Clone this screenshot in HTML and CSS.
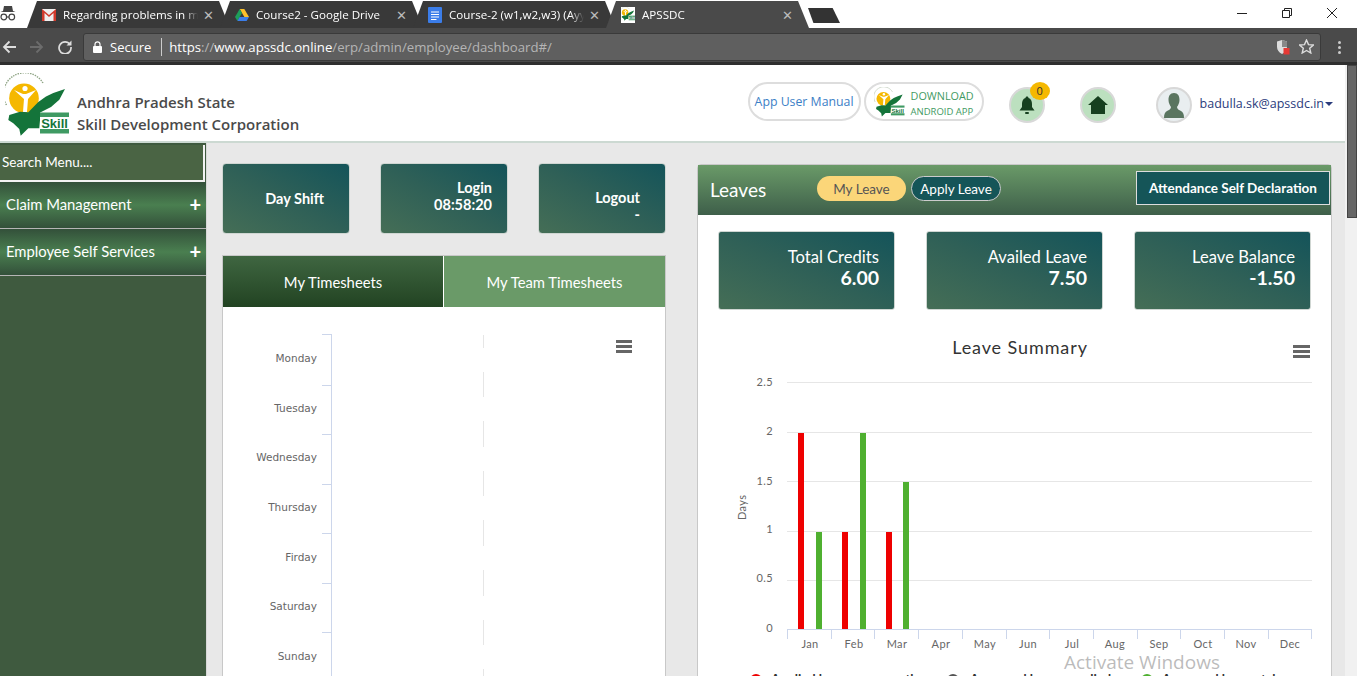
FILE: index.html
```html
<!DOCTYPE html>
<html lang="en">
<head>
    <meta charset="UTF-8">
    <meta name="viewport" content="width=device-width, initial-scale=1.0">
    <title>APSSDC</title>
    <link rel="stylesheet" href="styles.css">
</head>
<body>
    <!-- shared logo, used in header, favicon and download pill -->
    <svg class="defs" width="0" height="0">
        <symbol id="logo-mark" viewBox="0 0 64 64">
            <path d="M1.5 32 A21 21 0 0 1 38 10" fill="none" stroke="#8fa585" stroke-width="1.4" stroke-dasharray="1.5 1"/>
            <circle cx="19" cy="25.3" r="14.8" fill="#f5b800"/>
            <circle cx="20" cy="15.5" r="2.6" fill="#fff"/>
            <path d="M9 17 L19 26 L18 39 L22 39 L23 26 L31 17 L21 21 L18 21 Z" fill="#fff"/>
            <path d="M4.3 42 L15 38.7 L23.3 39.3 L33.3 29 L41 23.5 L48.3 20 L60 16 L54.3 26.7 L46 34 L35.7 39.3 L34.3 55.3 L23.3 55.3 L15.7 62.7 L14.3 56 L8.3 50.3 L3.3 47 Z" fill="#14743a"/>
            <rect x="35" y="39.5" width="29" height="21" fill="#fff"/>
            <rect x="35" y="39.5" width="29" height="4.5" fill="#3f9a63"/>
            <rect x="35" y="56" width="29" height="4.5" fill="#3f9a63"/>
            <text x="49.5" y="54.5" class="logo-skill" text-anchor="middle">Skill</text>
        </symbol>
    </svg>

    <div class="tabstrip">
        <svg class="incognito" width="16" height="18" viewBox="0 0 16 18">
            <path d="M4 2 L12 2 L13 7 L15.5 8 L0.5 8 L3 7 Z" fill="#444"/>
            <circle cx="3.8" cy="13" r="2.8" fill="none" stroke="#444" stroke-width="1.2"/>
            <circle cx="11.8" cy="13" r="2.8" fill="none" stroke="#444" stroke-width="1.2"/>
            <path d="M6.6 13 H9" stroke="#444" stroke-width="1.2"/>
        </svg>
        <div class="tab">
            <svg class="tab-icon" width="14" height="12" viewBox="0 0 14 12">
                <rect width="14" height="12" fill="#eee"/>
                <path d="M0 0 L7 6 L14 0 V12 H11.5 V4 L7 8 L2.5 4 V12 H0 Z" fill="#d0392b"/>
            </svg>
            <span class="tab-title">Regarding problems in mail</span>
            <span class="tab-close">&#x2715;</span>
        </div>
        <div class="tab">
            <svg class="tab-icon" width="14" height="12" viewBox="0 0 14 12">
                <path d="M4.7 0 H9.3 L14 8 H9.4 Z" fill="#fbc02d"/>
                <path d="M4.7 0 L7 4 L2.4 12 L0 8 Z" fill="#1e9e5a"/>
                <path d="M4.6 8 H14 L11.6 12 H2.4 Z" fill="#3b7de9"/>
            </svg>
            <span class="tab-title">Course2 - Google Drive</span>
            <span class="tab-close">&#x2715;</span>
        </div>
        <div class="tab">
            <svg class="tab-icon" width="14" height="16" viewBox="0 0 14 16">
                <rect width="14" height="16" rx="1" fill="#3b7de9"/>
                <path d="M3 5 H11 M3 7.5 H11 M3 10 H11 M3 12.5 H8.5" stroke="#fff" stroke-width="1.1"/>
            </svg>
            <span class="tab-title">Course-2 (w1,w2,w3) (Ayyappa)</span>
            <span class="tab-close">&#x2715;</span>
        </div>
        <div class="tab tab-active">
            <span class="tab-favicon"><svg width="14" height="14"><use href="#logo-mark"/></svg></span>
            <span class="tab-title">APSSDC</span>
            <span class="tab-close">&#x2715;</span>
        </div>
        <div class="new-tab"></div>
        <div class="window-controls">
            <svg width="10" height="10" viewBox="0 0 10 10"><path d="M0 5.5 H10" stroke="#222" stroke-width="1"/></svg>
            <svg width="10" height="10" viewBox="0 0 10 10"><path d="M2.5 2.5 V0.5 H9.5 V7.5 H7.5 M0.5 2.5 H7.5 V9.5 H0.5 Z" fill="none" stroke="#222" stroke-width="1"/></svg>
            <svg width="10" height="10" viewBox="0 0 10 10"><path d="M0 0 L10 10 M10 0 L0 10" stroke="#222" stroke-width="1"/></svg>
        </div>
    </div>

    <div class="toolbar">
        <svg class="nav-icon" width="14" height="14" viewBox="0 0 14 14"><path d="M14 7 H2 M7.5 1.5 L2 7 L7.5 12.5" fill="none" stroke="#ddd" stroke-width="1.8"/></svg>
        <svg class="nav-icon" width="14" height="14" viewBox="0 0 14 14"><path d="M0 7 H12 M6.5 1.5 L12 7 L6.5 12.5" fill="none" stroke="#6c6c6c" stroke-width="1.8"/></svg>
        <svg class="nav-icon" width="14" height="14" viewBox="0 0 14 14"><path d="M12 4.4 A6 6 0 1 0 13 7" fill="none" stroke="#ddd" stroke-width="1.7"/><path d="M13.5 0.5 V5.5 H8.5 Z" fill="#ddd"/></svg>
        <div class="urlbar">
            <svg width="9" height="12" viewBox="0 0 9 12"><path d="M2 5 V3.3 A2.5 2.5 0 0 1 7 3.3 V5" fill="none" stroke="#fff" stroke-width="1.2"/><rect y="5" width="9" height="7" rx="1" fill="#fff"/></svg>
            <span class="secure">Secure</span>
            <span class="url"><b>https</b>://<b>www.apssdc.online</b>/erp/admin/employee/dashboard#/</span>
            <span class="url-icons">
                <svg width="13" height="16" viewBox="0 0 13 16"><path d="M5 1 L10 2.5 V8 C10 11 8 13.5 5 15 C2 13.5 0 11 0 8 V2.5 Z" fill="#ddd"/><path d="M5 1 L10 2.5 V8 H5 Z" fill="#888"/><rect x="6.5" y="9" width="6" height="6.5" fill="#e53935"/></svg>
                <svg width="15" height="15" viewBox="0 0 15 15"><path d="M7.5 1 L9.5 5.6 L14.4 6 L10.7 9.2 L11.8 14 L7.5 11.5 L3.2 14 L4.3 9.2 L0.6 6 L5.5 5.6 Z" fill="none" stroke="#ddd" stroke-width="1.4"/></svg>
            </span>
        </div>
        <div class="dots"><i></i><i></i><i></i></div>
    </div>

    <div class="viewport">
        <div class="app">
            <header class="header">
                <svg class="logo" width="64" height="64"><use href="#logo-mark"/></svg>
                <div class="brand">
                    <div>Andhra Pradesh State</div>
                    <div>Skill Development Corporation</div>
                </div>
                <a class="pill pill-manual">App User Manual</a>
                <a class="pill pill-download">
                    <svg width="31" height="30"><use href="#logo-mark"/></svg>
                    <span class="download-text"><span>DOWNLOAD</span><small>ANDROID APP</small></span>
                </a>
                <div class="round-icon icon-bell">
                    <svg width="16" height="19" viewBox="0 0 16 19"><path d="M8 0.5 C9 0.5 9.5 1.2 9.5 2 C12 2.8 13 5 13 8 V11 L15.5 14.5 H0.5 L3 11 V8 C3 5 4 2.8 6.5 2 C6.5 1.2 7 0.5 8 0.5 Z" fill="#16401f"/><rect x="6" y="16" width="4" height="2" rx="1" fill="#16401f"/></svg>
                    <span class="badge">0</span>
                </div>
                <div class="round-icon icon-home">
                    <svg width="20" height="18" viewBox="0 0 20 18"><path d="M10 0 L20 9 H17 V18 H3 V9 H0 Z" fill="#16401f"/></svg>
                </div>
                <div class="round-icon icon-user">
                    <svg width="20" height="25" viewBox="0 0 20 25"><path d="M10 0 C14 0 15.5 3 15.5 7 C15.5 10 14 12.5 13 14 C13 16 15 17 17 18 C19 19 20 21 20 25 H0 C0 21 1 19 3 18 C5 17 7 16 7 14 C6 12.5 4.5 10 4.5 7 C4.5 3 6 0 10 0 Z" fill="#5a7560"/></svg>
                </div>
                <div class="user-mail">badulla.sk@apssdc.in<span class="caret"></span></div>
            </header>

            <div class="main">
                <aside class="sidebar">
                    <div class="menu-search">Search Menu....</div>
                    <div class="menu-item"><span>Claim Management</span><b>+</b></div>
                    <div class="menu-item"><span>Employee Self Services</span><b>+</b></div>
                </aside>

                <div class="content">
                    <div class="col-left">
                        <div class="shift-row">
                            <div class="shift-card shift-day">Day Shift</div>
                            <div class="shift-card shift-login">Login<br>08:58:20</div>
                            <div class="shift-card shift-logout">Logout<br>-</div>
                        </div>
                        <div class="panel timesheets">
                            <div class="ts-tabs">
                                <div class="ts-tab ts-tab-on">My Timesheets</div>
                                <div class="ts-tab">My Team Timesheets</div>
                            </div>
                            <svg class="chart" width="442" height="369" viewBox="223 307 442 369">
                                <g class="grid-dash">
                                    <path d="M483.5 335 V348 M483.5 372 V397 M483.5 421 V447 M483.5 471 V496 M483.5 520 V546 M483.5 570 V596 M483.5 620 V645 M483.5 669 V676"/>
                                </g>
                                <path class="axis" d="M331.5 334 V676 M322 334.5 H331 M322 385.5 H331 M322 434.5 H331 M322 484.5 H331 M322 533.5 H331 M322 583.5 H331 M322 632.5 H331"/>
                                <g class="day-labels" text-anchor="end">
                                    <text x="317" y="362">Monday</text>
                                    <text x="317" y="412">Tuesday</text>
                                    <text x="317" y="461">Wednesday</text>
                                    <text x="317" y="511">Thursday</text>
                                    <text x="317" y="561">Firday</text>
                                    <text x="317" y="610">Saturday</text>
                                    <text x="317" y="660">Sunday</text>
                                </g>
                                <path class="burger" d="M616 341.5 H632 M616 346.5 H632 M616 351.5 H632"/>
                            </svg>
                        </div>
                    </div>

                    <div class="panel leaves">
                        <div class="leaves-head">
                            <span class="leaves-title">Leaves</span>
                            <span class="chip chip-mine">My Leave</span>
                            <span class="chip chip-apply">Apply Leave</span>
                            <a class="declare-btn">Attendance Self Declaration</a>
                        </div>
                        <div class="stat-row">
                            <div class="stat-card">Total Credits<b>6.00</b></div>
                            <div class="stat-card">Availed Leave<b>7.50</b></div>
                            <div class="stat-card">Leave Balance<b>-1.50</b></div>
                        </div>
                        <svg class="chart" width="633" height="366" viewBox="698 310 633 366">
                            <text class="chart-title" x="1020" y="354" text-anchor="middle">Leave Summary</text>
                            <path class="burger" d="M1293 346.5 H1310 M1293 351.5 H1310 M1293 356.5 H1310"/>
                            <path class="grid-line" d="M787 382.5 H1312 M787 432.5 H1312 M787 481.5 H1312 M787 531.5 H1312 M787 580.5 H1312"/>
                            <path class="axis" d="M787 629.5 H1312 M787.5 630 V639 M831.5 630 V639 M874.5 630 V639 M918.5 630 V639 M962.5 630 V639 M1006.5 630 V639 M1049.5 630 V639 M1093.5 630 V639 M1137.5 630 V639 M1180.5 630 V639 M1224.5 630 V639 M1268.5 630 V639 M1311.5 630 V639"/>
                            <g class="bar-red">
                                <rect x="798" y="433" width="6" height="196"/>
                                <rect x="842" y="532" width="6" height="97"/>
                                <rect x="886" y="532" width="6" height="97"/>
                            </g>
                            <g class="bar-green">
                                <rect x="816" y="532" width="6" height="97"/>
                                <rect x="860" y="433" width="6" height="196"/>
                                <rect x="903" y="482" width="6" height="147"/>
                            </g>
                            <g class="tick-labels" text-anchor="end">
                                <text x="773" y="386">2.5</text>
                                <text x="773" y="435">2</text>
                                <text x="773" y="485">1.5</text>
                                <text x="773" y="533">1</text>
                                <text x="773" y="582">0.5</text>
                                <text x="773" y="632">0</text>
                            </g>
                            <g class="tick-labels" text-anchor="middle">
                                <text x="810" y="648">Jan</text>
                                <text x="854" y="648">Feb</text>
                                <text x="897" y="648">Mar</text>
                                <text x="941" y="648">Apr</text>
                                <text x="985" y="648">May</text>
                                <text x="1028" y="648">Jun</text>
                                <text x="1072" y="648">Jul</text>
                                <text x="1115" y="648">Aug</text>
                                <text x="1159" y="648">Sep</text>
                                <text x="1203" y="648">Oct</text>
                                <text x="1246" y="648">Nov</text>
                                <text x="1290" y="648">Dec</text>
                            </g>
                            <text class="tick-labels" transform="translate(746 520) rotate(-90)">Days</text>
                            <circle cx="756" cy="680" r="6" fill="#ee0000"/>
                            <circle cx="953" cy="680" r="6" fill="#555"/>
                            <circle cx="1147" cy="680" r="6" fill="#4fb030"/>
                            <g class="legend">
                                <text x="771" y="684">Applied leaves per month</text>
                                <text x="970" y="684">Approved leaves applied</text>
                                <text x="1162" y="684">Approved leaves taken</text>
                            </g>
                        </svg>
                    </div>
                </div>
            </div>
            <div class="activate">Activate Windows</div>
        </div>
        <div class="scrollbar"><div class="scroll-thumb"></div></div>
    </div>
</body>
</html>
```

FILE: styles.css
```css
html, body {
    margin: 0;
    height: 676px;
    overflow: hidden;
}

body {
    font-family: 'Lato', 'Open Sans', sans-serif;
    background: #fff;
    display: flex;
    flex-direction: column;
}

.defs {
    position: absolute;
}

.logo-skill {
    font-family: 'Liberation Sans', sans-serif;
    font-size: 13px;
    font-weight: 700;
    fill: #14743a;
}

/* browser chrome */
.tabstrip {
    height: 28px;
    display: flex;
    align-items: flex-end;
    background: #fff;
    flex-shrink: 0;
}

.incognito {
    margin: 0 11px 6px 0;
}

.tab {
    width: 203px;
    height: 27px;
    margin-right: -10px;
    flex-shrink: 0;
    display: flex;
    align-items: center;
    padding: 0 12px 0 15px;
    box-sizing: border-box;
    background: #393939;
    clip-path: polygon(0 100%, 10px 0, calc(100% - 11px) 0, 100% 100%);
    font-family: 'Open Sans', sans-serif;
    font-size: 11.6px;
    color: #fff;
}

.tab-active {
    background: #4a4a4a;
}

.tab-icon, .tab-favicon {
    flex-shrink: 0;
    margin-right: 7px;
}

.tab-favicon {
    width: 14px;
    height: 16px;
    background: #fff;
    line-height: 0;
}

.tab-title {
    flex: 1;
    overflow: hidden;
    white-space: nowrap;
    -webkit-mask-image: linear-gradient(to right, #000 90%, transparent 100%);
    mask-image: linear-gradient(to right, #000 90%, transparent 100%);
}

.tab-close {
    width: 20px;
    text-align: center;
    font-size: 13px;
    color: #bbb;
}

.new-tab {
    width: 32px;
    height: 15px;
    margin: 0 0 5px 9px;
    flex-shrink: 0;
    background: #333;
    clip-path: polygon(0 0, 77% 0, 100% 100%, 17% 100%);
}

.window-controls {
    margin: 0 20px 0 auto;
    align-self: flex-start;
    padding-top: 8px;
    display: flex;
    gap: 35px;
}

.toolbar {
    height: 37px;
    flex-shrink: 0;
    box-sizing: border-box;
    border-bottom: 3px solid #2f2f2f;
    background: #4a4a4a;
    display: flex;
    align-items: center;
    padding: 4px 16px 0 2px;
}

.nav-icon {
    margin-right: 14px;
}

.urlbar {
    flex: 1;
    height: 28px;
    margin-left: -3px;
    margin-top: -1px;
    box-sizing: border-box;
    border: 1px solid #3a3a3a;
    border-radius: 3px;
    background: #5f5f5f;
    display: flex;
    align-items: center;
    padding: 0 6px 0 9px;
}

.secure {
    margin-left: 8px;
    padding-right: 10px;
    border-right: 1px solid #ccc;
    font-family: 'Open Sans', sans-serif;
    font-size: 13px;
    line-height: 18px;
    color: #fff;
}

.url {
    margin-left: 7px;
    font-family: 'Open Sans', sans-serif;
    font-size: 13.2px;
    color: #b5b5b5;
}

.url b {
    font-weight: 400;
    color: #fff;
}

.url-icons {
    margin-left: auto;
    display: flex;
    align-items: center;
    gap: 9px;
}

.dots {
    margin-left: 17px;
    display: flex;
    flex-direction: column;
    gap: 2px;
}

.dots i {
    width: 3px;
    height: 3px;
    border-radius: 50%;
    background: #ccc;
}

/* page */
.viewport {
    flex: 1;
    min-height: 0;
    display: flex;
}

.app {
    flex: 1;
    min-width: 0;
    position: relative;
    display: flex;
    flex-direction: column;
    background: #e8e8e8;
}

.scrollbar {
    width: 12px;
    background: #f1f1f1;
}

.scroll-thumb {
    height: 153px;
    margin-left: 2px;
    box-sizing: border-box;
    border: 1px solid #444;
    background: #666;
}

.header {
    height: 78px;
    flex-shrink: 0;
    box-sizing: border-box;
    border-bottom: 2px solid #ccd9d2;
    background: #fff;
    display: flex;
    align-items: center;
    padding-left: 5px;
}

.logo {
    margin: 4px 8px 0 0;
}

.brand {
    font-family: 'Open Sans', sans-serif;
    font-size: 15px;
    font-weight: 600;
    line-height: 22px;
    color: #4a4a4a;
    margin-top: 20px;
}

.pill {
    box-sizing: border-box;
    height: 39px;
    border: 2px solid #ddd;
    border-radius: 20px;
    display: flex;
    align-items: center;
    justify-content: center;
    background: #fff;
    margin-top: -3px;
}

.pill-manual {
    width: 113px;
    margin-left: auto;
    font-family: 'Open Sans', sans-serif;
    font-size: 12.3px;
    color: #3c80c6;
}

.pill-download {
    width: 120px;
    margin-left: 3px;
    gap: 6px;
}

.download-text {
    display: flex;
    flex-direction: column;
    gap: 5px;
    padding-top: 4px;
    font-family: 'Open Sans', sans-serif;
    font-size: 10.8px;
    line-height: 11px;
    color: #3f9a63;
}

.download-text small {
    font-size: 9.5px;
}

.round-icon {
    width: 36px;
    height: 36px;
    box-sizing: border-box;
    border: 2px solid #d8d8d8;
    border-radius: 50%;
    background: #bce0bf;
    display: flex;
    align-items: center;
    justify-content: center;
    position: relative;
    margin-top: 4px;
}

.icon-bell {
    margin-left: 25px;
}

.icon-home {
    margin-left: 35px;
}

.icon-user {
    margin-left: 40px;
    background: #e9eef0;
}

.badge {
    position: absolute;
    top: -7px;
    right: -7px;
    width: 20px;
    height: 18px;
    border-radius: 50%;
    background: #f5b800;
    font-family: 'Open Sans', sans-serif;
    font-size: 11px;
    line-height: 18px;
    text-align: center;
    color: #333;
}

.user-mail {
    margin: 0 12px 0 8px;
    font-family: 'Open Sans', sans-serif;
    font-size: 12.5px;
    color: #2b3c7c;
    display: flex;
    align-items: center;
}

.caret {
    margin: 2px 0 0 1px;
    border: 4px solid transparent;
    border-top-color: #2b3c7c;
    border-bottom: 0;
}

.main {
    flex: 1;
    min-height: 0;
    display: flex;
    overflow: hidden;
}

/* sidebar */
.sidebar {
    width: 207px;
    flex-shrink: 0;
    box-sizing: border-box;
    padding-top: 2px;
    background: #3f5a3f;
    color: #fff;
    border-right: 1px solid #d8d8d8;
}

.menu-search {
    height: 37px;
    width: 205px;
    box-sizing: border-box;
    border-bottom: 2px solid #f2f2f2;
    border-right: 2px solid #f2f2f2;
    background: #4a6444;
    padding-left: 2px;
    font-size: 13.5px;
    line-height: 34px;
}

.menu-item {
    height: 47px;
    box-sizing: border-box;
    border-bottom: 1px solid #b5b5b5;
    background: linear-gradient(to bottom, #33503a 0%, #4a7f50 50%, #33503a 100%);
    display: flex;
    align-items: center;
    justify-content: space-between;
    padding: 0 5px 2px 6px;
    font-size: 14.8px;
}

.menu-item b {
    font-size: 20px;
    font-weight: 700;
    line-height: 20px;
}

/* content */
.content {
    flex: 1;
    min-width: 0;
    display: flex;
    align-items: flex-start;
    gap: 31px;
    padding: 20px 0 0 15px;
}

.col-left {
    width: 444px;
    flex-shrink: 0;
}

.shift-row {
    display: flex;
    justify-content: space-between;
}

.shift-card {
    width: 128px;
    height: 71px;
    box-sizing: border-box;
    border: 1px solid #cfd6d2;
    border-radius: 4px;
    background: linear-gradient(to top right, #456e56, #2f6057 50%, #14545a);
    display: flex;
    flex-direction: column;
    justify-content: center;
    padding-right: 15px;
    text-align: right;
    font-size: 14.5px;
    font-weight: 700;
    line-height: 17px;
    color: #fff;
}

.shift-day {
    padding-right: 25px;
}

.shift-login {
    padding-bottom: 5px;
}

.shift-logout {
    padding: 15px 25px 0 0;
}

.panel {
    border: 1px solid #c8c8c8;
    background: #fff;
}

.timesheets {
    margin-top: 21px;
    height: 420px;
}

.ts-tabs {
    display: flex;
}

.ts-tab {
    flex: 1;
    height: 51px;
    display: flex;
    align-items: center;
    justify-content: center;
    background: #6a9a68;
    font-size: 14.8px;
    color: #fff;
}

.ts-tab-on {
    flex: none;
    width: 221px;
    box-sizing: border-box;
    background: linear-gradient(to bottom, #3f6641, #224322);
    border-right: 1px solid #fff;
}

.chart {
    display: block;
}

.axis {
    fill: none;
    stroke: #ccd6eb;
    stroke-width: 1;
}

.grid-dash path {
    fill: none;
    stroke: #e6e6e6;
    stroke-width: 1;
}

.grid-line {
    fill: none;
    stroke: #e6e6e6;
    stroke-width: 1;
}

.day-labels text {
    font-family: 'DejaVu Sans', sans-serif;
    font-size: 10.5px;
    fill: #666;
}

.burger {
    fill: none;
    stroke: #666;
    stroke-width: 3;
}

.leaves {
    width: 633px;
    flex-shrink: 0;
    height: 520px;
    margin-top: 1px;
    border-radius: 4px 4px 0 0;
}

.leaves-head {
    height: 50px;
    box-sizing: border-box;
    background: linear-gradient(to bottom, #6a9a68, #3e5f4a);
    display: flex;
    align-items: center;
    padding: 0 1px 3px 12px;
    color: #fff;
}

.leaves-title {
    width: 107px;
    margin-top: 2px;
    font-size: 19px;
    font-weight: 400;
}

.chip {
    height: 25px;
    box-sizing: border-box;
    border-radius: 13px;
    display: flex;
    align-items: center;
    justify-content: center;
    font-size: 13.5px;
}

.chip-mine {
    width: 89px;
    background: #fbd679;
    color: #555;
}

.chip-apply {
    width: 90px;
    margin-left: 5px;
    border: 1px solid #ccc;
    background: #155558;
}

.declare-btn {
    margin: -1px 0 0 auto;
    width: 194px;
    height: 34px;
    box-sizing: border-box;
    border: 1px solid #ddd;
    background: #155558;
    display: flex;
    align-items: center;
    justify-content: center;
    font-size: 13.5px;
    font-weight: 700;
}

.stat-row {
    display: flex;
    justify-content: space-between;
    padding: 16px 20px 0;
    height: 95px;
    box-sizing: border-box;
}

.stat-card {
    width: 177px;
    height: 79px;
    box-sizing: border-box;
    border: 1px solid #cfd6d2;
    border-radius: 3px;
    background: linear-gradient(to top right, #456e56, #2f6057 50%, #14545a);
    display: flex;
    flex-direction: column;
    align-items: flex-end;
    justify-content: center;
    padding: 0 15px 8px 0;
    font-size: 16.6px;
    line-height: 22px;
    color: #fff;
}

.stat-card b {
    font-size: 19.5px;
    line-height: 20px;
}

.chart-title {
    font-family: 'Lato', sans-serif;
    font-size: 18px;
    letter-spacing: 0.9px;
    fill: #333;
}

.tick-labels, .tick-labels text {
    font-family: 'Lato', sans-serif;
    font-size: 11px;
    letter-spacing: 0.4px;
    fill: #666;
}

.bar-red rect {
    fill: #ee0000;
}

.bar-green rect {
    fill: #4fb030;
}

.legend text {
    font-family: 'Lato', sans-serif;
    font-size: 13px;
    font-weight: 700;
    fill: #333;
}

.activate {
    position: absolute;
    left: 1064px;
    top: 584px;
    font-family: 'Open Sans', sans-serif;
    font-size: 19px;
    line-height: 26px;
    color: rgba(120, 120, 120, 0.5);
    white-space: nowrap;
}
```
